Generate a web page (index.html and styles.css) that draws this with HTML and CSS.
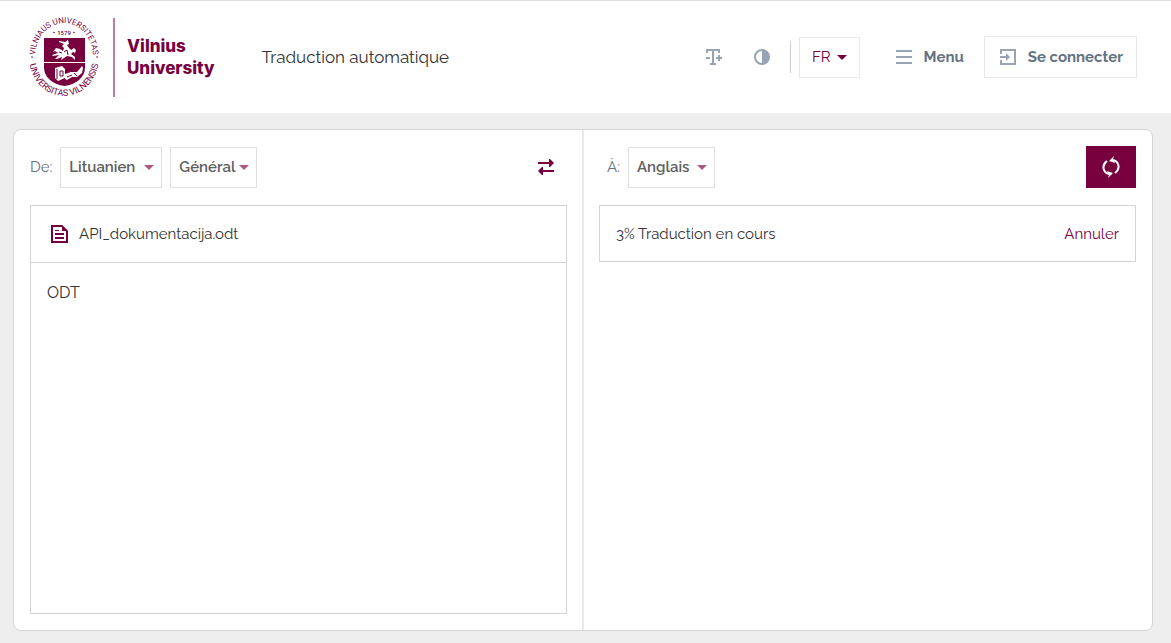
FILE: index.html
```html
<!DOCTYPE html>
<html lang="fr">
<head>
<meta charset="utf-8">
<meta name="viewport" content="width=device-width, initial-scale=1">
<title>Traduction automatique</title>
<link rel="stylesheet" href="styles.css">
</head>
<body>
<header class="header">
  <a class="brand" href="#" aria-label="Vilnius University">
    <svg class="seal" viewBox="0 0 72 82" aria-hidden="true">
      <defs>
        <path id="arc-top" d="M7 41A29 34 0 1 1 65 41"/>
        <path id="arc-bottom" d="M1 41A35 39 0 0 0 71 41"/>
      </defs>
      <text class="seal-text"><textPath href="#arc-top" startOffset="50%" text-anchor="middle">VILNIAUS UNIVERSITETAS</textPath></text>
      <text class="seal-text seal-bottom"><textPath href="#arc-bottom" startOffset="50%" text-anchor="middle">UNIVERSITAS VILNENSIS</textPath></text>
      <text class="seal-year" x="36" y="19" text-anchor="middle">1579</text>
      <circle class="ink" cx="26" cy="16.500" r=".8"/><circle class="ink" cx="46" cy="16.500" r=".8"/>
      <circle class="ink" cx="4" cy="41" r=".8"/><circle class="ink" cx="69" cy="41" r=".8"/>
      <path class="ink" d="M16 22H57V46H16Z M16 47H57V51Q57 59 51 64Q45 69 36.500 70Q28 69 22 64Q16 59 16 51Z"/>
      <path class="paper" d="M31 25L37 26L40 24L41 28L39 29L41 32L43 34L46 32L48 34L47 37L45 36L43 38L47 41L47 44L44 41L39 40L36 42L33 44L34 41L29 43L27 43L31 39L25 40L24 39L30 37L27 35L25 36L28 32L32 33L35 35L36 32L34 30L36 28L31 26Z"/>
      <path class="seal-cut" d="M36 36L39 34L40 39M31 36L34 37"/>
      <path class="paper" d="M27 52L34 50L37 53V62L30 65L27 62Z M37 58L43 56L49 56L54 50L55 52L54 57L49 61L44 61L39 64L37 63Z"/>
      <path class="seal-cut" d="M29 53V63M32 55H35V60H32ZM39 61L44 59M46 57L49 60"/>
    </svg>
    <span class="brand-line"></span>
    <span class="brand-name">Vilnius<br>University</span>
  </a>
  <h1 class="title">Traduction automatique</h1>
  <div class="tools">
    <button class="icon-btn" type="button" aria-label="Taille du texte">
      <svg class="icon" viewBox="0 0 16 16"><path d="M0 0H14V4H12V2H8V14H10V16H4V14H6V2H2V4H0ZM0 8H4V10H0ZM10 8H12V6H14V8H16V10H14V12H12V10H10Z"/></svg>
    </button>
    <button class="icon-btn" type="button" aria-label="Contraste">
      <svg class="icon" viewBox="0 0 16 16"><path fill-rule="evenodd" d="M8 0A8 8 0 1 1 8 16A8 8 0 1 1 8 0ZM8 2A6 6 0 0 0 8 14Z"/></svg>
    </button>
    <div class="lang-wrap">
      <button class="lang" type="button">FR <svg class="arrow" viewBox="0 0 10 5"><path d="M0 0H10L5 5Z"/></svg></button>
    </div>
    <button class="menu" type="button">
      <svg class="icon" viewBox="0 0 16 16"><path d="M0 1H16V3H0ZM0 7H16V9H0ZM0 13H16V15H0Z"/></svg>
      Menu
    </button>
    <a class="login" href="#">
      <svg class="icon" viewBox="0 0 16 16"><path d="M0 0H16V16H0V11H2V14H14V2H2V5H0ZM0 7H6V4L10 8L6 12V9H0Z"/></svg>
      Se connecter
    </a>
  </div>
</header>
<main class="main">
  <div class="card">
    <section class="pane">
      <div class="bar">
        <label class="label" for="source">De:</label>
        <span class="picker"><select class="select wide" id="source"><option>Lituanien</option></select><svg class="arrow" viewBox="0 0 10 5"><path d="M0 0H10L5 5Z"/></svg></span>
        <span class="picker"><select class="select" id="domain" aria-label="Domaine"><option>Général</option></select><svg class="arrow" viewBox="0 0 10 5"><path d="M0 0H10L5 5Z"/></svg></span>
        <button class="swap" type="button" aria-label="Inverser les langues">
          <svg viewBox="0 0 16 16"><path d="M0 3H11V0H12L16 4L12 8H11V5H0ZM16 11H5V8H4L0 12L4 16H5V13H16Z"/></svg>
        </button>
      </div>
      <div class="box document">
        <div class="row file">
          <svg class="file-icon" viewBox="0 0 18 18"><path fill-rule="evenodd" d="M1 0H12L18 6V18H1ZM2 1V17H17V6H12V1Z"/><path d="M1 0H12L18 6H12V2H3V16H16V6H18V18H1ZM5 5H9V6H5ZM5 8H14V10H5ZM5 12H14V14H5Z"/></svg>
          <span>API_dokumentacija.odt</span>
        </div>
        <p class="content">ODT</p>
      </div>
    </section>
    <section class="pane target">
      <div class="bar">
        <label class="label" for="target">À:</label>
        <span class="picker"><select class="select" id="target"><option>Anglais</option></select><svg class="arrow" viewBox="0 0 10 5"><path d="M0 0H10L5 5Z"/></svg></span>
        <button class="translate" type="button" aria-label="Traduire">
          <svg viewBox="0 0 18 22"><path class="spin" d="M5 5Q0 9 2 14Q3 17 7 18M13 17Q18 13 16 8Q15 5 11 4"/><path class="paper" d="M7 5L12 0L11 3L13 7ZM11 17L6 22L7 19L5 15Z"/></svg>
        </button>
      </div>
      <div class="box">
        <div class="row">
          <span>3% Traduction en cours</span>
          <button class="cancel" type="button">Annuler</button>
        </div>
      </div>
    </section>
  </div>
</main>
</body>
</html>
```

FILE: styles.css
```css
* { box-sizing: border-box; }
body {
  margin: 0;
  min-height: 100vh;
  display: flex;
  flex-direction: column;
  background: #eee;
  color: #333;
  font: 400 15px/24px Raleway, Lato, "Open Sans", sans-serif;
}
button, select { font: inherit; color: inherit; margin: 0; padding: 0; border: 0; border-radius: 0; background: none; cursor: pointer; }
a { color: inherit; text-decoration: none; }
svg { display: block; flex: none; }
.header {
  display: flex;
  align-items: center;
  height: 113px;
  padding: 0 34px 0 28px;
  background: #fff;
  border-top: 1px solid #ddd;
}
.brand { display: flex; align-items: center; gap: 12px; color: #78003f; }
.seal { width: 72px; height: 82px; }
.seal-text { font: 400 8px Roboto, sans-serif; fill: #78003f; }
.seal-bottom { font-size: 9px; }
.seal-year { font: 500 6px Roboto, sans-serif; fill: #78003f; }
.ink { fill: #78003f; }
.paper { fill: #fff; }
.seal-cut { fill: none; stroke: #78003f; stroke-width: 1; }
.brand-line { width: 2px; height: 79px; margin-left: 1px; background: #bc809f; }
.brand-name { font: 800 17px/22px Inter, sans-serif; }
.title { margin: 0 0 0 47px; font-size: 17px; font-weight: 400; }
.tools { display: flex; align-items: center; margin-left: auto; color: #637381; font-weight: 700; }
.icon { width: 16px; height: 16px; fill: #98a4b3; }
.icon-btn { padding: 8px; margin-right: 16px; }
.icon-btn + .lang-wrap { margin-left: -4px; }
.lang-wrap { padding-left: 9px; background: linear-gradient(#ccc, #ccc) left / 1px 32px no-repeat; }
.arrow { width: 10px; height: 5px; fill: #78003f; }
.lang { display: flex; align-items: center; gap: 6px; height: 41px; padding: 0 12px; border: 1px solid #e8e8e8; color: #78003f; font-weight: 400; }
.menu { display: flex; align-items: center; gap: 12px; margin: 0 20px 0 36px; }
.login { display: flex; align-items: center; gap: 12px; height: 42px; padding: 0 13px 0 15px; border: 1px solid #e8e8e8; }
.main { flex: 1; display: flex; padding: 16px 18px 12px 13px; }
.card { flex: 1; display: flex; background: linear-gradient(#e9e9e9, #e9e9e9) center / 2px 100% no-repeat #fff; border: 1px solid #d3d4d5; border-radius: 8px; }
.pane { flex: 1; display: flex; flex-direction: column; gap: 17px; padding: 16px; }
.bar { display: flex; align-items: center; gap: 8px; height: 42px; }
.label { color: #637381; }
.target .label { padding-left: 8px; }
.picker { position: relative; }
.select { display: block; width: 87px; height: 41px; padding: 0 8px; border: 1px solid #e0e0e0; appearance: none; color: #606060; font-weight: 600; }
.wide { width: 102px; }
.picker .arrow { position: absolute; right: 8px; top: 18px; fill: #ac5a84; pointer-events: none; }
.swap { margin-left: auto; padding: 13px; }
.swap svg { width: 16px; height: 16px; fill: #78003f; }
.translate { display: grid; place-items: center; width: 50px; height: 42px; margin-left: auto; background: #78003f; }
.translate svg { width: 18px; height: 22px; }
.spin { fill: none; stroke: #fff; stroke-width: 2; }
.box { border: 1px solid #d3d4d5; }
.document { flex: 1; }
.row { display: flex; align-items: center; height: 55px; padding: 0 16px; }
.file { gap: 11px; height: 57px; padding: 0 19px; border-bottom: 1px solid #d3d4d5; }
.file-icon { width: 18px; height: 18px; fill: #78003f; }
.content { margin: 0; padding: 18px 16px; font-size: 16px; }
.cancel { margin-left: auto; color: #78003f; }
```
